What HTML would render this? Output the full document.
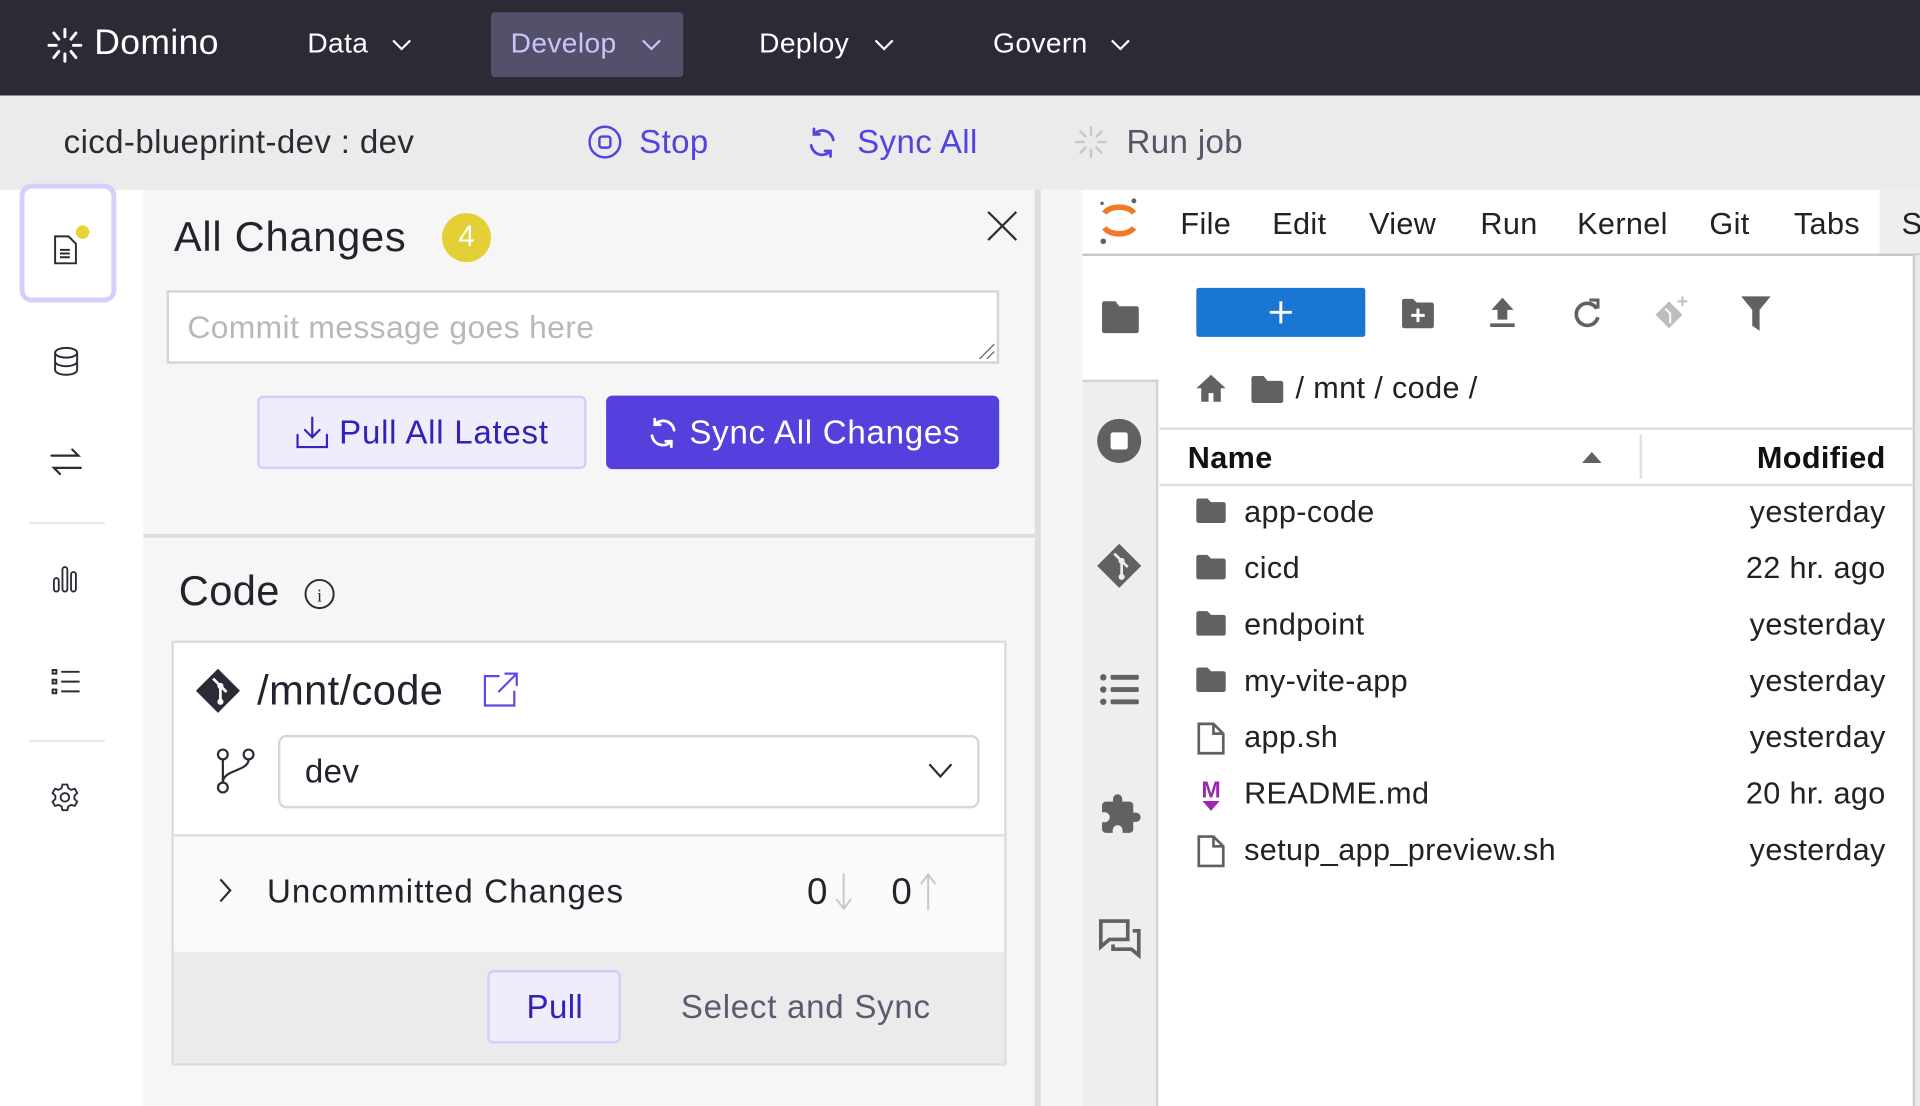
<!DOCTYPE html>
<html><head><meta charset="utf-8"><style>
*{margin:0;padding:0;box-sizing:border-box}
html,body{width:1920px;height:1106px;overflow:hidden;background:#f6f6f6;font-family:"Liberation Sans",Arial,sans-serif}
#s{position:absolute;left:0;top:0;width:1568px;height:903px;transform:scale(1.22449,1.2248);transform-origin:0 0;overflow:hidden;background:#f6f6f6}
.a{position:absolute}
.t{position:absolute;white-space:nowrap;line-height:1;letter-spacing:0.3px}
svg{position:absolute;overflow:visible}
</style></head><body><div id="s">
<div class="a" style="left:0;top:0;width:1568px;height:78px;background:#2b2b36"></div>
<svg style="left:38px;top:22px" width="30" height="30" viewBox="0 0 30 30" fill="none" stroke="#fff" stroke-width="2.4" stroke-linecap="round"><path d="M15 2v6M24 5l-4 5M28 15h-6M24 25l-4-5M15 28v-6M6 25l4-5M2 15h6M6 5l4 5"/></svg>
<div class="t" style="left:77px;top:21px;font-size:29px;color:#fff">Domino</div>
<div class="t" style="left:251px;top:24px;font-size:23px;color:#fff">Data</div>
<svg style="left:320px;top:32px" width="16" height="10"><path d="M1 1l7 7 7-7" stroke="#fff" stroke-width="1.8" fill="none"/></svg>
<div class="a" style="left:401px;top:10px;width:157px;height:53px;background:#52506a;border-radius:3px"></div>
<div class="t" style="left:417px;top:24px;font-size:23px;color:#cac5f7">Develop</div>
<svg style="left:524px;top:32px" width="16" height="10"><path d="M1 1l7 7 7-7" stroke="#cac5f7" stroke-width="1.8" fill="none"/></svg>
<div class="t" style="left:620px;top:24px;font-size:23px;color:#fff">Deploy</div>
<svg style="left:714px;top:32px" width="16" height="10"><path d="M1 1l7 7 7-7" stroke="#fff" stroke-width="1.8" fill="none"/></svg>
<div class="t" style="left:811px;top:24px;font-size:23px;color:#fff">Govern</div>
<svg style="left:907px;top:32px" width="16" height="10"><path d="M1 1l7 7 7-7" stroke="#fff" stroke-width="1.8" fill="none"/></svg>
<div class="a" style="left:0;top:78px;width:1568px;height:77px;background:#ebebeb"></div>
<div class="t" style="left:52px;top:103px;font-size:27px;color:#2b2b36">cicd-blueprint-dev : dev</div>
<svg style="left:480px;top:102px" width="28" height="28"><circle cx="14" cy="14" r="12.5" stroke="#5145dd" stroke-width="2" fill="none"/><rect x="9.5" y="9.5" width="9" height="9" rx="2" stroke="#5145dd" stroke-width="2" fill="none"/></svg>
<div class="t" style="left:522px;top:103px;font-size:27px;color:#5145dd">Stop</div>
<svg style="left:658px;top:103px" width="27" height="27" viewBox="0 0 24 24" fill="none" stroke="#5145dd" stroke-width="2" stroke-linecap="round"><path d="M20 10a8 8 0 0 0-14-4M4 14a8 8 0 0 0 14 4M6 2v4h4M18 22v-4h-4"/></svg>
<div class="t" style="left:700px;top:103px;font-size:27px;color:#5145dd">Sync All</div>
<svg style="left:877px;top:102px" width="28" height="28" fill="none" stroke="#c8c8cc" stroke-width="2" stroke-linecap="round"><path d="M14 2v6M14 20v6M2 14h6M20 14h6M5.5 5.5l4 4M18.5 18.5l4 4M5.5 22.5l4-4M18.5 9.5l4-4"/></svg>
<div class="t" style="left:920px;top:103px;font-size:27px;color:#55556a">Run job</div>
<div class="a" style="left:0;top:155px;width:117px;height:748px;background:#fff"></div>
<div class="a" style="left:16px;top:150px;width:79px;height:97px;border:4px solid #d6cffc;border-radius:10px;background:#fff"></div>
<svg style="left:44px;top:192px" width="20" height="24" fill="none" stroke="#2b2b36" stroke-width="1.6"><path d="M1 1h11l6 6v16H1z M5 12h8M5 15h8M5 18h8"/></svg>
<div class="a" style="left:62px;top:184px;width:11px;height:11px;border-radius:50%;background:#e6d434"></div>
<svg style="left:43px;top:283px" width="22" height="24" fill="none" stroke="#2b2b36" stroke-width="1.6"><ellipse cx="11" cy="5" rx="9" ry="4"/><path d="M2 5v14c0 2.2 4 4 9 4s9-1.8 9-4V5M2 12c0 2.2 4 4 9 4s9-1.8 9-4"/></svg>
<svg style="left:41px;top:365px" width="26" height="24" fill="none" stroke="#2b2b36" stroke-width="1.8" stroke-linecap="round"><path d="M1 7h22l-5-5M25 17H3l5 5"/></svg>
<div class="a" style="left:24px;top:426px;width:62px;height:2px;background:#ebebeb"></div>
<svg style="left:43px;top:462px" width="22" height="22" fill="none" stroke="#2b2b36" stroke-width="1.5"><rect x="1" y="10" width="4" height="11" rx="2"/><rect x="8" y="1" width="4" height="20" rx="2"/><rect x="15" y="5" width="4" height="16" rx="2"/></svg>
<svg style="left:42px;top:546px" width="24" height="22" fill="none" stroke="#2b2b36" stroke-width="1.6"><rect x="1" y="1" width="3" height="3"/><rect x="1" y="9" width="3" height="3"/><rect x="1" y="17" width="3" height="3"/><path d="M8 2.5h15M8 10.5h15M8 18.5h15"/></svg>
<div class="a" style="left:24px;top:604px;width:62px;height:2px;background:#ebebeb"></div>
<svg style="left:41px;top:639px" width="24" height="24" viewBox="0 0 24 24" fill="none" stroke="#2b2b36" stroke-width="1.5"><circle cx="12" cy="12" r="3.5"/><path d="M10 1.5h4l.7 3 2.4 1.4 3-.9 2 3.5-2.3 2.1v2.8l2.3 2.1-2 3.5-3-.9-2.4 1.4-.7 3h-4l-.7-3-2.4-1.4-3 .9-2-3.5 2.3-2.1v-2.8L1.9 8.5l2-3.5 3 .9L9.3 4.5z"/></svg>
<div class="t" style="left:142px;top:177px;font-size:34px;color:#23232e;letter-spacing:0.6px">All Changes</div>
<div class="a" style="left:361px;top:174px;width:40px;height:40px;border-radius:50%;background:#e3d036;color:#fff;font-size:24px;text-align:center;line-height:40px">4</div>
<svg style="left:806px;top:172px" width="25" height="25"><path d="M1 1l23 23M24 1L1 24" stroke="#2b2b36" stroke-width="1.8"/></svg>
<div class="a" style="left:136px;top:237px;width:680px;height:60px;background:#fff;border:2px solid #d6d6d6"></div>
<div class="t" style="left:153px;top:254px;font-size:26px;color:#b8b8b8">Commit message goes here</div>
<svg style="left:799px;top:280px" width="14" height="14"><path d="M13 1L1 13M13 7L7 13" stroke="#777" stroke-width="1.2"/></svg>
<div class="a" style="left:210px;top:323px;width:269px;height:60px;background:#efedfc;border:2px solid #d3cdf9;border-radius:5px"></div>
<svg style="left:241px;top:339px" width="28" height="28" fill="none" stroke="#3326c0" stroke-width="1.8" stroke-linecap="round"><path d="M14 2v16M8 12l6 6 6-6M2 16v10h24V16"/></svg>
<div class="t" style="left:277px;top:340px;font-size:27px;color:#2e22b8;letter-spacing:0.6px">Pull All Latest</div>
<div class="a" style="left:495px;top:323px;width:321px;height:60px;background:#5340dd;border-radius:5px"></div>
<svg style="left:528px;top:340px" width="27" height="27" viewBox="0 0 24 24" fill="none" stroke="#fff" stroke-width="2" stroke-linecap="round"><path d="M20 10a8 8 0 0 0-14-4M4 14a8 8 0 0 0 14 4M6 2v4h4M18 22v-4h-4"/></svg>
<div class="t" style="left:563px;top:340px;font-size:27px;color:#fff;letter-spacing:0.6px">Sync All Changes</div>
<div class="a" style="left:117px;top:436px;width:728px;height:3px;background:#dcdcdc"></div>
<div class="t" style="left:146px;top:466px;font-size:34px;color:#23232e">Code</div>
<svg style="left:248px;top:472px" width="26" height="26"><circle cx="13" cy="13" r="11.5" stroke="#2b2b36" stroke-width="1.6" fill="none"/><text x="13" y="19" font-size="15" text-anchor="middle" fill="#2b2b36" font-family="Liberation Serif">i</text></svg>
<div class="a" style="left:140px;top:523px;width:682px;height:347px;border:2px solid #dcdcdc;background:#fff;overflow:hidden">
 <div class="a" style="left:0;top:156px;width:680px;height:96px;background:#fafafa;border-top:2px solid #dedede"></div>
 <div class="a" style="left:0;top:252px;width:680px;height:95px;background:#ebebeb"></div>
</div>
<svg style="left:159px;top:545px" width="38" height="38" viewBox="0 0 38 38"><path d="M19 1L37 19 19 37 1 19z" fill="#2b2b36"/><path d="M15 9l6 6v14M21 15l5 5" stroke="#fff" stroke-width="2.2" fill="none"/><circle cx="21" cy="15" r="2.5" fill="#fff"/><circle cx="21" cy="28" r="2.5" fill="#fff"/></svg>
<div class="t" style="left:210px;top:547px;font-size:34px;color:#23232e">/mnt/code</div>
<svg style="left:395px;top:549px" width="28" height="28" fill="none" stroke="#5a4be6" stroke-width="1.8"><path d="M13 3H1v24h24V15M17 1h10v10M27 1L12 16"/></svg>
<svg style="left:177px;top:611px" width="32" height="38" fill="none" stroke="#2b2b36" stroke-width="1.8"><circle cx="5" cy="5" r="4"/><circle cx="26" cy="5" r="4"/><circle cx="5" cy="32" r="4"/><path d="M5 9v19M26 9c0 10-21 8-21 19"/></svg>
<div class="a" style="left:227px;top:600px;width:573px;height:60px;background:#fff;border:2px solid #d8d8d8;border-radius:7px"></div>
<div class="t" style="left:249px;top:617px;font-size:27px;color:#23232e">dev</div>
<svg style="left:758px;top:622px" width="20" height="14"><path d="M1 2l9 10 9-10" stroke="#2b2b36" stroke-width="1.8" fill="none"/></svg>
<svg style="left:178px;top:716px" width="12" height="22"><path d="M2 2l8 9-8 9" stroke="#2b2b36" stroke-width="1.8" fill="none"/></svg>
<div class="t" style="left:218px;top:715px;font-size:27px;color:#23232e;letter-spacing:0.9px">Uncommitted Changes</div>
<div class="t" style="left:659px;top:714px;font-size:30px;color:#23232e">0</div>
<svg style="left:681px;top:712px" width="16" height="32"><path d="M8 1v28M2 22l6 8 6-8" stroke="#c8c8c8" stroke-width="1.6" fill="none"/></svg>
<div class="t" style="left:728px;top:714px;font-size:30px;color:#23232e">0</div>
<svg style="left:750px;top:712px" width="16" height="32"><path d="M8 31V3M2 10l6-8 6 8" stroke="#c8c8c8" stroke-width="1.6" fill="none"/></svg>
<div class="a" style="left:398px;top:792px;width:109px;height:60px;background:#efedfc;border:2px solid #d3cdf9;border-radius:5px"></div>
<div class="t" style="left:430px;top:809px;font-size:27px;color:#2e22b8">Pull</div>
<div class="t" style="left:556px;top:809px;font-size:27px;color:#5b5b70;letter-spacing:0.6px">Select and Sync</div>
<div class="a" style="left:845px;top:155px;width:5px;height:748px;background:#dedede"></div>
<div class="a" style="left:850px;top:155px;width:34px;height:748px;background:#f5f5f5"></div>
<div class="a" style="left:884px;top:155px;width:684px;height:748px;background:#fff"></div>
<div class="a" style="left:1535px;top:155px;width:33px;height:53px;background:#eeeeee"></div>
<div class="a" style="left:884px;top:207px;width:684px;height:2px;background:#c8c8c8"></div>
<svg style="left:897px;top:160px" width="34" height="42"><path d="M5 14a13 8 0 0 1 24 0" stroke="#f37726" stroke-width="4.5" fill="none"/><path d="M5 26a13 8 0 0 0 24 0" stroke="#f37726" stroke-width="4.5" fill="none"/><circle cx="29" cy="4" r="2" fill="#616262"/><circle cx="4" cy="37" r="2.3" fill="#616262"/><circle cx="3" cy="6" r="1.4" fill="#616262"/></svg>
<div class="t" style="left:964px;top:171px;font-size:25px;color:#222">File</div>
<div class="t" style="left:1039px;top:171px;font-size:25px;color:#222">Edit</div>
<div class="t" style="left:1118px;top:171px;font-size:25px;color:#222">View</div>
<div class="t" style="left:1209px;top:171px;font-size:25px;color:#222">Run</div>
<div class="t" style="left:1288px;top:171px;font-size:25px;color:#222">Kernel</div>
<div class="t" style="left:1396px;top:171px;font-size:25px;color:#222">Git</div>
<div class="t" style="left:1465px;top:171px;font-size:25px;color:#222">Tabs</div>
<div class="t" style="left:1553px;top:171px;font-size:25px;color:#222">S</div>
<div class="a" style="left:1562px;top:208px;width:6px;height:695px;background:#e8e8e8;border-left:2px solid #d0d0d0"></div>
<div class="a" style="left:884px;top:310px;width:62px;height:593px;background:#eeeeee;border-right:2px solid #d4d4d4;border-top:2px solid #d4d4d4"></div>
<svg style="left:898px;top:244px" width="34" height="30"><path d="M2 4q0-2 2-2h9l3 4h14q2 0 2 2v18q0 2-2 2H4q-2 0-2-2z" fill="#616161"/></svg>
<svg style="left:895px;top:341px" width="38" height="38"><circle cx="19" cy="19" r="18" fill="#616161"/><rect x="12" y="12" width="14" height="14" rx="2" fill="#fff"/></svg>
<svg style="left:895px;top:443px" width="38" height="38" viewBox="0 0 38 38"><path d="M19 1L37 19 19 37 1 19z" fill="#616161"/><path d="M15 9l6 6v14M21 15l5 5" stroke="#eee" stroke-width="2.2" fill="none"/><circle cx="21" cy="15" r="2.5" fill="#eee"/><circle cx="21" cy="28" r="2.5" fill="#eee"/></svg>
<svg style="left:898px;top:549px" width="32" height="28" fill="#616161"><circle cx="3" cy="4" r="2.6"/><circle cx="3" cy="14" r="2.6"/><circle cx="3" cy="24" r="2.6"/><rect x="9" y="2" width="23" height="4" rx="1"/><rect x="9" y="12" width="23" height="4" rx="1"/><rect x="9" y="22" width="23" height="4" rx="1"/></svg>
<svg style="left:897px;top:647px" width="36" height="36" viewBox="0 0 24 24" fill="#616161"><path d="M20.5 11H19V7a2 2 0 0 0-2-2h-4V3.5a2.5 2.5 0 0 0-5 0V5H4a2 2 0 0 0-2 2v3.8h1.5a2.7 2.7 0 0 1 0 5.4H2V20a2 2 0 0 0 2 2h3.8v-1.5a2.7 2.7 0 0 1 5.4 0V22H17a2 2 0 0 0 2-2v-4h1.5a2.5 2.5 0 0 0 0-5z"/></svg>
<svg style="left:897px;top:750px" width="36" height="34" fill="none" stroke="#616161" stroke-width="3"><path d="M2 2h22v15H9l-7 6z M28 10h5v20l-6-5H12v-4"/></svg>
<div class="a" style="left:977px;top:235px;width:138px;height:40px;background:#1976d2;border-radius:2px"></div>
<svg style="left:1036px;top:245px" width="20" height="20"><path d="M10 1v18M1 10h18" stroke="#fff" stroke-width="2.4"/></svg>
<svg style="left:1144px;top:243px" width="28" height="26"><path d="M1 3q0-2 2-2h7l3 3h12q2 0 2 2v17q0 2-2 2H3q-2 0-2-2z" fill="#616161"/><path d="M14 9v11M8.5 14.5h11" stroke="#fff" stroke-width="2.4"/></svg>
<svg style="left:1216px;top:243px" width="22" height="26" fill="#616161"><path d="M11 0L2 10h5v8h8v-8h5z"/><rect x="1" y="21" width="20" height="3"/></svg>
<svg style="left:1284px;top:243px" width="24" height="26" fill="none" stroke="#616161" stroke-width="3"><path d="M20 9a9 9 0 1 0 1 7"/><path d="M14 2h7v7" stroke-width="2.5"/></svg>
<svg style="left:1350px;top:240px" width="30" height="32"><path d="M13 6l11 11-11 11L2 17z" fill="#bdbdbd"/><path d="M10 12l4 4v8" stroke="#fff" stroke-width="1.6" fill="none"/><path d="M24 2v8M20 6h8" stroke="#bdbdbd" stroke-width="1.6"/></svg>
<svg style="left:1422px;top:242px" width="24" height="28" fill="#616161"><path d="M0 0h24l-9 11v17l-6-4V11z"/></svg>
<svg style="left:976px;top:305px" width="26" height="24" fill="#616161"><path d="M13 1L1 12h4v11h6v-7h4v7h6V12h4z"/></svg>
<svg style="left:1021px;top:306px" width="28" height="24"><path d="M1 3q0-2 2-2h8l3 4h11q2 0 2 2v14q0 2-2 2H3q-2 0-2-2z" fill="#616161"/></svg>
<div class="t" style="left:1058px;top:305px;font-size:25px;color:#222">/ mnt / code /</div>
<div class="a" style="left:947px;top:349px;width:615px;height:2px;background:#e0e0e0"></div>
<div class="a" style="left:947px;top:395px;width:615px;height:2px;background:#e0e0e0"></div>
<div class="a" style="left:1339px;top:355px;width:2px;height:36px;background:#e0e0e0"></div>
<div class="t" style="left:970px;top:362px;font-size:25px;color:#111;font-weight:bold">Name</div>
<svg style="left:1291px;top:367px" width="18" height="12"><path d="M1 11L9 2l8 9z" fill="#616161"/></svg>
<div class="t" style="right:28px;top:362px;font-size:25px;color:#111;font-weight:bold">Modified</div>
<svg style="left:976px;top:406px" width="26" height="22"><path d="M1 3q0-2 2-2h7l3 3h10q2 0 2 2v13q0 2-2 2H3q-2 0-2-2z" fill="#616161"/></svg>
<svg style="left:976px;top:452px" width="26" height="22"><path d="M1 3q0-2 2-2h7l3 3h10q2 0 2 2v13q0 2-2 2H3q-2 0-2-2z" fill="#616161"/></svg>
<svg style="left:976px;top:498px" width="26" height="22"><path d="M1 3q0-2 2-2h7l3 3h10q2 0 2 2v13q0 2-2 2H3q-2 0-2-2z" fill="#616161"/></svg>
<svg style="left:976px;top:544px" width="26" height="22"><path d="M1 3q0-2 2-2h7l3 3h10q2 0 2 2v13q0 2-2 2H3q-2 0-2-2z" fill="#616161"/></svg>
<svg style="left:977px;top:589px" width="24" height="28" fill="none" stroke="#616161" stroke-width="2.2"><path d="M2 2h12l8 8v16H2z M14 2v8h8"/></svg>
<svg style="left:978px;top:634px" width="22" height="30"><text x="11" y="17" font-size="19" font-weight="bold" text-anchor="middle" fill="#9c27b0" font-family="Liberation Sans">M</text><path d="M4 20h14l-7 8z" fill="#9c27b0"/></svg>
<svg style="left:977px;top:681px" width="24" height="28" fill="none" stroke="#616161" stroke-width="2.2"><path d="M2 2h12l8 8v16H2z M14 2v8h8"/></svg>
<div class="t" style="left:1016px;top:406px;font-size:25px;color:#222">app-code</div>
<div class="t" style="left:1016px;top:452px;font-size:25px;color:#222">cicd</div>
<div class="t" style="left:1016px;top:498px;font-size:25px;color:#222">endpoint</div>
<div class="t" style="left:1016px;top:544px;font-size:25px;color:#222">my-vite-app</div>
<div class="t" style="left:1016px;top:590px;font-size:25px;color:#222">app.sh</div>
<div class="t" style="left:1016px;top:636px;font-size:25px;color:#222">README.md</div>
<div class="t" style="left:1016px;top:682px;font-size:25px;color:#222">setup_app_preview.sh</div>
<div class="t" style="right:28px;top:406px;font-size:25px;color:#222">yesterday</div>
<div class="t" style="right:28px;top:452px;font-size:25px;color:#222">22 hr. ago</div>
<div class="t" style="right:28px;top:498px;font-size:25px;color:#222">yesterday</div>
<div class="t" style="right:28px;top:544px;font-size:25px;color:#222">yesterday</div>
<div class="t" style="right:28px;top:590px;font-size:25px;color:#222">yesterday</div>
<div class="t" style="right:28px;top:636px;font-size:25px;color:#222">20 hr. ago</div>
<div class="t" style="right:28px;top:682px;font-size:25px;color:#222">yesterday</div>
</div></body></html>
